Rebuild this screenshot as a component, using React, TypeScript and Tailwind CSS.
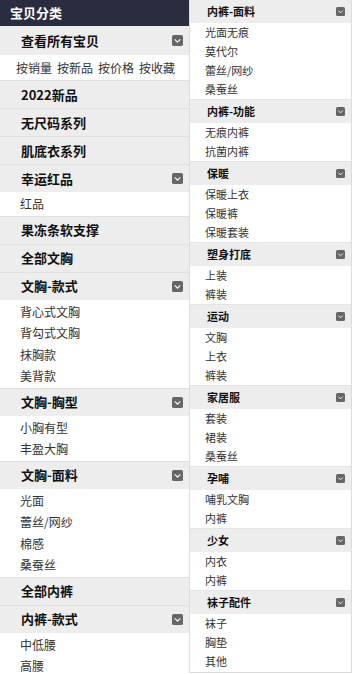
import React from 'react';

type Section = { title: string; items?: string[]; arrow?: boolean };

const leftSections: Section[] = [
  { title: '2022新品' },
  { title: '无尺码系列' },
  { title: '肌底衣系列' },
  { title: '幸运红品', items: ['红品'] },
  { title: '果冻条软支撑' },
  { title: '全部文胸' },
  { title: '文胸-款式', items: ['背心式文胸', '背勾式文胸', '抹胸款', '美背款'] },
  { title: '文胸-胸型', items: ['小胸有型', '丰盈大胸'] },
  { title: '文胸-面料', items: ['光面', '蕾丝/网纱', '棉感', '桑蚕丝'] },
  { title: '全部内裤' },
  { title: '内裤-款式', items: ['中低腰', '高腰'] },
];

const rightSections: Section[] = [
  { title: '内裤-面料', items: ['光面无痕', '莫代尔', '蕾丝/网纱', '桑蚕丝'] },
  { title: '内裤-功能', items: ['无痕内裤', '抗菌内裤'] },
  { title: '保暖', items: ['保暖上衣', '保暖裤', '保暖套装'] },
  { title: '塑身打底', items: ['上装', '裤装'] },
  { title: '运动', items: ['文胸', '上衣', '裤装'] },
  { title: '家居服', items: ['套装', '裙装', '桑蚕丝'] },
  { title: '孕哺', items: ['哺乳文胸', '内裤'] },
  { title: '少女', items: ['内衣', '内裤'] },
  { title: '袜子配件', items: ['袜子', '胸垫', '其他'] },
];

// 灰色小方块里的下拉箭头
function Arrow({ size }: { size: number }) {
  return (
    <svg width={size} height={size} viewBox="0 0 12 12" className="shrink-0">
      <rect x="0" y="0" width="12" height="12" rx="2" fill="#666666" />
      <polyline points="3,4.8 6,7.8 9,4.8" fill="none" stroke="#ffffff" strokeWidth="1.2" />
    </svg>
  );
}

export default function App() {
  return (
    <div
      className="flex h-[674px] w-[353px] overflow-hidden bg-white"
      style={{ fontFamily: '"Noto Sans CJK SC", "Liberation Sans", sans-serif' }}
    >
      {/* 左列 */}
      <div className="w-[189px] shrink-0">
        <div className="flex h-[26px] items-center bg-[#2a2d40] pl-[10px] text-[13px] font-bold text-white">
          宝贝分类
        </div>

        <div className="border-b border-[#e0e0e0]">
          <div className="flex h-[29px] items-center justify-between bg-[#ededed] pr-[6px] pl-[21px]">
            <span className="text-[13px] font-bold text-[#111]">查看所有宝贝</span>
            <Arrow size={11} />
          </div>
          <div className="flex h-[25px] items-center gap-[5px] pl-[16px] text-[12px] text-[#333]">
            <span>按销量</span>
            <span>按新品</span>
            <span>按价格</span>
            <span>按收藏</span>
          </div>
        </div>

        {leftSections.map((s) => (
          <div key={s.title} className="border-b border-[#e0e0e0]">
            <div className="flex h-[27px] items-center justify-between bg-[#ededed] pr-[6px] pl-[21px]">
              <span className="text-[13px] font-bold text-[#111]">{s.title}</span>
              {s.items && <Arrow size={11} />}
            </div>
            {s.items && (
              <div className="pt-[1px] pb-[1px]">
                {s.items.map((it) => (
                  <div key={it} className="h-[21.5px] pl-[20px] text-[12px] leading-[21.5px] text-[#333]">
                    {it}
                  </div>
                ))}
              </div>
            )}
          </div>
        ))}
      </div>

      {/* 右列 */}
      <div className="h-[673px] w-[163px] shrink-0 border-x border-b border-[#dddddd]">
        {rightSections.map((s, i) => (
          <div key={s.title} className={i > 0 ? 'border-t border-[#e4e4e4]' : ''}>
            <div className="flex h-[23px] items-center justify-between bg-[#ededed] pr-[6px] pl-[17px]">
              <span className="text-[11px] font-bold text-[#111]">{s.title}</span>
              <Arrow size={9} />
            </div>
            <div>
              {s.items?.map((it) => (
                <div key={it} className="h-[19px] pl-[15px] text-[11px] leading-[19px] text-[#333]">
                  {it}
                </div>
              ))}
            </div>
          </div>
        ))}
      </div>
    </div>
  );
}
